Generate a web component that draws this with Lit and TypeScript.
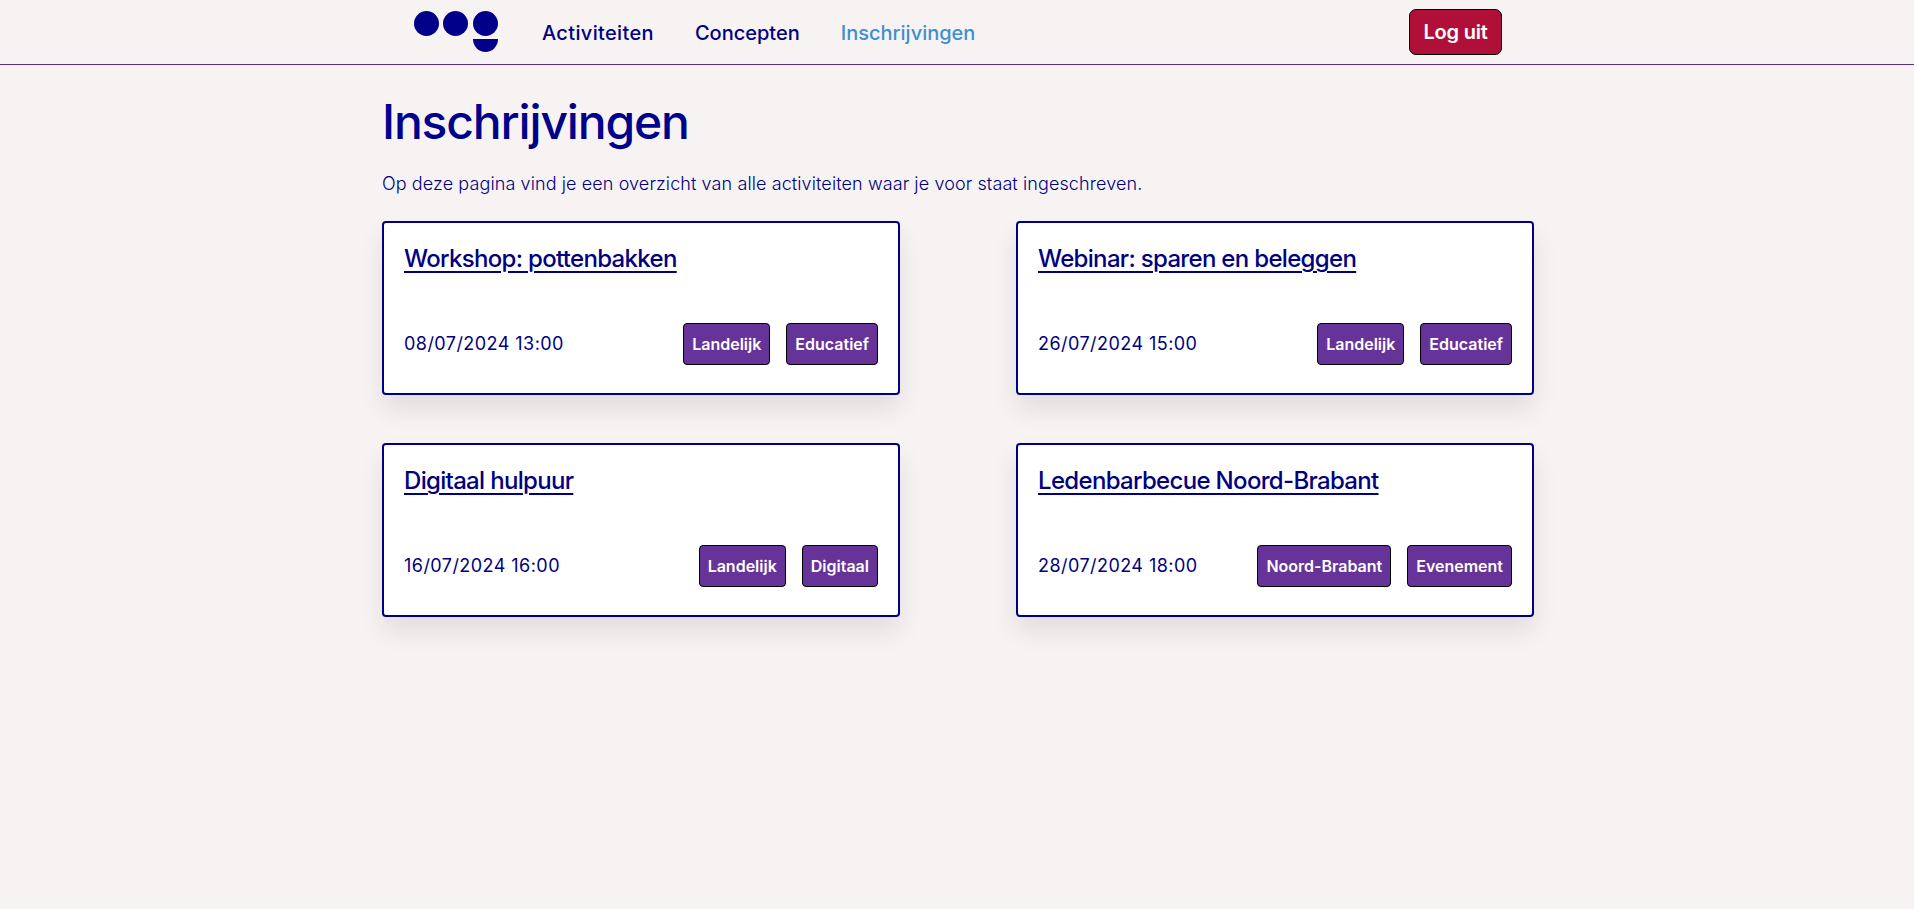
import { LitElement, html, css } from "lit";
import { customElement } from "lit/decorators.js";

type Item = { title: string; date: string; tags: string[] };

const items: Item[] = [
  { title: "Workshop: pottenbakken", date: "08/07/2024 13:00", tags: ["Landelijk", "Educatief"] },
  { title: "Webinar: sparen en beleggen", date: "26/07/2024 15:00", tags: ["Landelijk", "Educatief"] },
  { title: "Digitaal hulpuur", date: "16/07/2024 16:00", tags: ["Landelijk", "Digitaal"] },
  { title: "Ledenbarbecue Noord-Brabant", date: "28/07/2024 18:00", tags: ["Noord-Brabant", "Evenement"] },
];

@customElement("app-root")
export class AppRoot extends LitElement {
  static styles = css`
    :host {
      display: block;
      min-height: 100vh;
      background: #f7f3f3;
      color: #000080;
      font-family: "Inter", "Liberation Sans", sans-serif;
    }

    .header {
      height: 64px;
      border-bottom: 1px solid #55308c;
      padding-left: 382px;
      padding-right: 412px;
      display: flex;
      align-items: center;
    }
    .logo {
      margin-left: 32px;
      display: block;
    }
    .nav {
      display: flex;
      gap: 41px;
      margin-left: 44px;
      padding-top: 2px;
      font-size: 20px;
      font-weight: 500;
    }
    .nav a {
      color: #000080;
      text-decoration: none;
    }
    .nav a:first-child {
      letter-spacing: 0.35px;
    }
    .nav a.-active {
      color: #3f8fcf;
    }
    .logout {
      margin-left: auto;
      width: 93px;
      height: 46px;
      background: #b01038;
      border: 1px solid #000;
      border-radius: 7px;
      color: #fff;
      font: inherit;
      font-size: 20px;
      font-weight: 600;
      letter-spacing: -0.2px;
    }

    .main {
      padding: 27px 380px 0 382px;
    }
    h1 {
      margin: 0;
      font-size: 48px;
      line-height: 60px;
      font-weight: 500;
      letter-spacing: -1.17px;
      color: #00008b;
    }
    .intro {
      margin: 20px 0 0;
      font-size: 18px;
      line-height: 24px;
      font-weight: 300;
      letter-spacing: 0.1px;
    }
    .grid {
      margin-top: 25px;
      display: grid;
      grid-template-columns: 518px 518px;
      column-gap: 116px;
      row-gap: 48px;
    }
    .card {
      height: 174px;
      box-sizing: border-box;
      background: #fff;
      border: 2px solid #000080;
      border-radius: 4px;
      padding: 20px;
      box-shadow: 0 14px 26px rgba(0, 0, 0, 0.09);
      display: flex;
      flex-direction: column;
      justify-content: space-between;
    }
    .title {
      font-size: 24px;
      line-height: 32px;
      font-weight: 500;
      letter-spacing: -0.68px;
      color: #000080;
      text-decoration: underline;
      text-decoration-thickness: 2px;
      text-underline-offset: 4px;
      align-self: flex-start;
    }
    .bottom {
      display: flex;
      align-items: center;
      justify-content: space-between;
      margin-bottom: 8px;
    }
    .date {
      font-size: 18px;
      letter-spacing: 0.45px;
      margin-bottom: 2px;
    }
    .tags {
      display: flex;
      gap: 16px;
    }
    .tag {
      height: 42px;
      box-sizing: border-box;
      padding: 0 8px;
      display: flex;
      align-items: center;
      background: #663399;
      border: 1px solid #000;
      border-radius: 4px;
      color: #fff;
      font-size: 16px;
      font-weight: 600;
    }
  `;

  render() {
    return html`
      <header class="header">
        <svg class="logo" width="84" height="42" viewBox="0 0 84 42">
          <circle cx="12.5" cy="12.5" r="12.5" fill="#00008b"></circle>
          <circle cx="41.5" cy="12.5" r="12.5" fill="#00008b"></circle>
          <circle cx="71.5" cy="12.5" r="12.5" fill="#00008b"></circle>
          <path d="M59 28h25a12.5 13 0 0 1-25 0z" fill="#00008b"></path>
        </svg>
        <nav class="nav">
          <a href="#">Activiteiten</a>
          <a href="#">Concepten</a>
          <a href="#" class="-active">Inschrijvingen</a>
        </nav>
        <button class="logout">Log uit</button>
      </header>
      <main class="main">
        <h1>Inschrijvingen</h1>
        <p class="intro">Op deze pagina vind je een overzicht van alle activiteiten waar je voor staat ingeschreven.</p>
        <div class="grid">
          ${items.map(
            (item) => html`
              <article class="card">
                <a class="title" href="#">${item.title}</a>
                <div class="bottom">
                  <span class="date">${item.date}</span>
                  <div class="tags">
                    ${item.tags.map((t) => html`<span class="tag">${t}</span>`)}
                  </div>
                </div>
              </article>
            `
          )}
        </div>
      </main>
    `;
  }
}
